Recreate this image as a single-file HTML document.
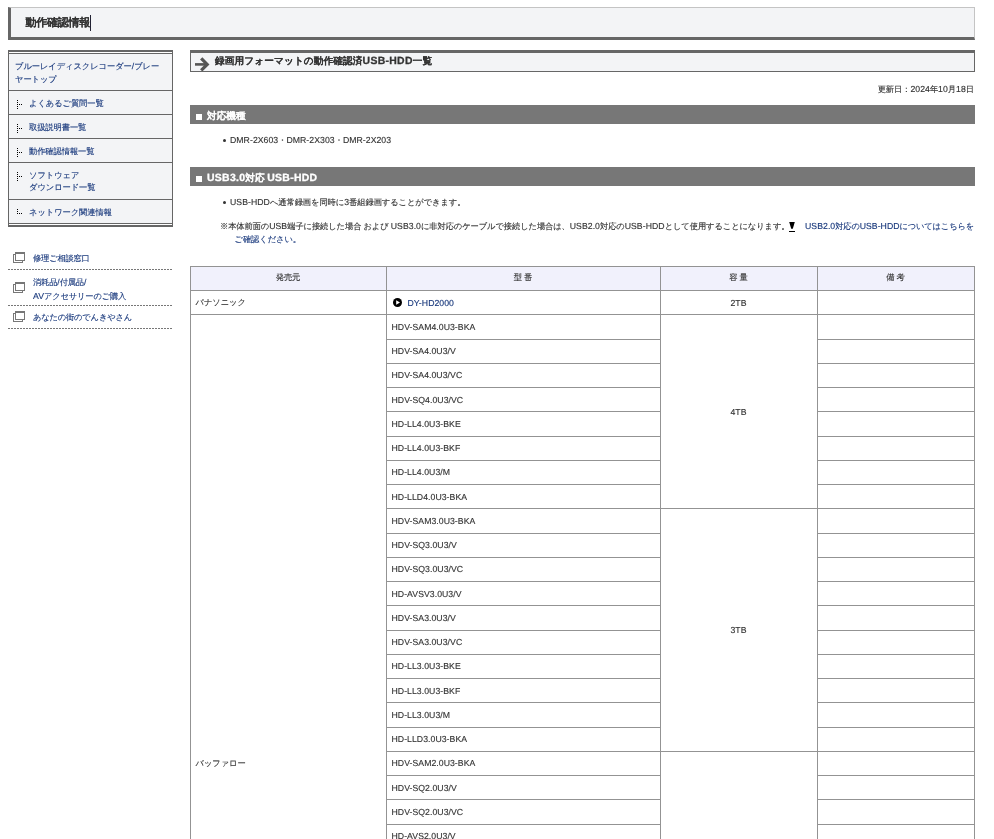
<!DOCTYPE html>
<html lang="ja">
<head>
<meta charset="utf-8">
<title>動作確認情報</title>
<style>
html,body{margin:0;padding:0;background:#fff;overflow:hidden;width:994px;height:839px;}
body{font-family:"Liberation Sans",sans-serif;color:#333;font-size:8.28px;line-height:12.4px;position:relative;letter-spacing:-.08px;-webkit-text-stroke:.13px;text-rendering:geometricPrecision;}
div,span,a,i,b,h1,h2,h3,ul,li{box-sizing:border-box;}
a{color:#18387c;text-decoration:none;}
#gs{position:absolute;left:0;top:0;width:994px;height:839px;overflow:hidden;will-change:transform;}
.l{font-size:1.05em;letter-spacing:.05px;}
h2 .l,h3 .l{font-size:1.08em;letter-spacing:.3px;-webkit-text-stroke:.3px;}
.t{position:absolute;white-space:nowrap;}
#hdr{position:absolute;left:8px;top:7px;width:967px;height:33px;border-left:3px solid #666;border-bottom:3px solid #666;border-top:1px solid #c4c4c4;border-right:1px solid #c4c4c4;background:#f3f4f6;}
#hdr>span{position:absolute;left:14.5px;top:6.5px;font-size:11.04px;font-weight:bold;line-height:16px;color:#333;white-space:nowrap;letter-spacing:-.3px;}
#hdr i{position:absolute;left:79px;top:7px;width:1px;height:16px;background:#223;}
#nav{position:absolute;left:8px;top:50px;width:165px;height:177px;border:1px solid #666;border-top-width:2px;border-bottom-width:2px;padding:1px 0;background:#fff;}
#nav ul{list-style:none;margin:0;padding:0;border-top:1px solid #666;border-bottom:1px solid #666;background:#f3f4f6;height:171px;}
#nav li{border-top:1px solid #666;height:24px;padding:6.9px 0 0 20px;line-height:12.4px;position:relative;white-space:nowrap;}
#nav li.f{border-top:0;height:36px;padding-left:6px;padding-top:6.4px;}
#nav li.d{height:37px;}
#nav li b{position:absolute;left:8px;top:9px;width:5px;height:9px;
 background:
 linear-gradient(#000,#000) 0 0/1px 1px no-repeat,
 linear-gradient(#000,#000) 0 2px/1px 1px no-repeat,
 linear-gradient(#000,#000) 0 4px/1px 1px no-repeat,
 linear-gradient(#000,#000) 2px 4px/1px 1px no-repeat,
 linear-gradient(#000,#000) 4px 4px/1px 1px no-repeat,
 linear-gradient(#000,#000) 0 6px/1px 1px no-repeat,
 linear-gradient(#000,#000) 0 8px/1px 1px no-repeat;}
#nav li b.e{height:5px;}
.sl{position:absolute;left:8px;width:165px;height:1px;background:repeating-linear-gradient(90deg,#777 0,#777 1.8px,transparent 1.8px,transparent 3px);}
.wi{position:absolute;left:13px;width:12px;height:11px;}
.wi:before{content:"";position:absolute;left:0;top:2px;width:10px;height:9px;border:1px solid #777;box-sizing:border-box;}
.wi:after{content:"";position:absolute;left:2px;top:0;width:10px;height:9px;border:1px solid #777;border-top-width:2px;background:#fff;box-sizing:border-box;}
.sd{position:absolute;left:33px;white-space:nowrap;letter-spacing:-.2px;}
h2{position:absolute;left:190px;top:50px;width:785px;height:22px;margin:0;border:1px solid #666;border-top:3px solid #666;background:#f3f4f6;font-size:9.66px;line-height:18px;font-weight:bold;overflow:hidden;letter-spacing:.09px;}
h2,h3,#hdr{-webkit-text-stroke:.04px;}
h2>span{position:absolute;left:24px;top:0;white-space:nowrap;}
h2 svg{position:absolute;left:4px;top:3px;}
h3{position:absolute;left:190px;width:785px;height:19px;margin:0;background:#777;color:#fff;font-size:9.66px;line-height:19px;font-weight:bold;white-space:nowrap;letter-spacing:0;}
h3 i{position:absolute;left:6px;top:9px;width:6px;height:6px;background:#fff;}
h3>span{position:absolute;left:17px;top:1.5px;}
.bul{position:absolute;left:230px;white-space:nowrap;}
.bul:before{content:"";position:absolute;left:-7.5px;top:5px;width:3px;height:3px;border-radius:1.5px;background:#333;}
.hl,.vl{position:absolute;background:#939393;}
.hl{height:1px;}
.vl{width:1px;}
.c{position:absolute;white-space:nowrap;line-height:12px;}
.cc{text-align:center;}
</style>
</head>
<body>
<div id="gs">
<div id="hdr"><span>動作確認情報</span><i></i></div>
<div id="nav"><ul>
<li class="f"><a>ブルーレイディスクレコーダー<span class="l">/</span>ブレー<br>ヤートップ</a></li>
<li><b></b><a>よくあるご質問一覧</a></li>
<li><b></b><a>取扱説明書一覧</a></li>
<li><b></b><a>動作確認情報一覧</a></li>
<li class="d"><b></b><a>ソフトウェア<br>ダウンロード一覧</a></li>
<li><b class="e"></b><a>ネットワーク関連情報</a></li>
</ul></div>
<i class="wi" style="top:252px"></i><a class="sd" style="top:252.5px">修理ご相談窓口</a>
<div class="sl" style="top:269px"></div>
<i class="wi" style="top:282px"></i><a class="sd" style="top:276.4px">消耗品<span class="l">/</span>付属品<span class="l">/</span><br><span class="l">AV</span>アクセサリーのご購入</a>
<div class="sl" style="top:305px"></div>
<i class="wi" style="top:311px"></i><a class="sd" style="top:311.7px">あなたの街のでんきやさん</a>
<div class="sl" style="top:328px"></div>
<h2><svg width="16" height="16" viewBox="0 0 16 16"><path d="M0 8.4h11" fill="none" stroke="#555" stroke-width="2.6"/><path d="M6.2 2.4l6 6-6 6" fill="none" stroke="#555" stroke-width="3.2"/></svg><span>録画用フォーマットの動作確認済<span class="l">USB-HDD</span>一覧</span></h2>
<div class="t" style="right:20px;top:83px">更新日：<span class="l">2024</span>年<span class="l">10</span>月<span class="l">18</span>日</div>
<h3 style="top:105px"><i></i><span>対応機種</span></h3>
<div class="bul" style="top:134px"><span class="l">DMR-2X603</span>・<span class="l">DMR-2X303</span>・<span class="l">DMR-2X203</span></div>
<h3 style="top:167px"><i></i><span><span class="l">USB3.0</span>対応 <span class="l">USB-HDD</span></span></h3>
<div class="bul" style="top:196px"><span class="l">USB-HDD</span>へ通常録画を同時に<span class="l">3</span>番組録画することができます。</div>
<div class="t" style="left:220px;top:219.5px;line-height:13.3px;letter-spacing:-.1px">※本体前面の<span class="l">USB</span>端子に接続した場合 および <span class="l">USB3.0</span>に非対応のケーブルで接続した場合は、<span class="l">USB2.0</span>対応の<span class="l">USB-HDD</span>として使用することになります。</div>
<svg class="t" style="left:789px;top:222px" width="6" height="10" viewBox="0 0 6 10"><path d="M0.2 0h5.6l-2 6.8h-1.6z" fill="#000"/><rect x="0" y="9" width="6" height="1" fill="#000"/></svg>
<a class="t" style="left:805px;top:219.5px;line-height:13.3px;letter-spacing:-.2px"><span class="l">USB2.0</span>対応の<span class="l">USB-HDD</span>についてはこちらを</a>
<a class="t" style="left:234.5px;top:232.8px;line-height:13.3px">ご確認ください。</a>

<div style="position:absolute;left:190px;top:266px;width:784px;height:24px;background:#f1f1fc"></div>
<div class="hl" style="left:190px;top:266px;width:785px"></div>
<div class="hl" style="left:190px;top:290px;width:785px"></div>
<div class="hl" style="left:190px;top:314px;width:785px"></div>
<div class="hl" style="left:386px;top:339px;width:275px"></div>
<div class="hl" style="left:817px;top:339px;width:158px"></div>
<div class="hl" style="left:386px;top:363px;width:275px"></div>
<div class="hl" style="left:817px;top:363px;width:158px"></div>
<div class="hl" style="left:386px;top:387px;width:275px"></div>
<div class="hl" style="left:817px;top:387px;width:158px"></div>
<div class="hl" style="left:386px;top:411px;width:275px"></div>
<div class="hl" style="left:817px;top:411px;width:158px"></div>
<div class="hl" style="left:386px;top:436px;width:275px"></div>
<div class="hl" style="left:817px;top:436px;width:158px"></div>
<div class="hl" style="left:386px;top:460px;width:275px"></div>
<div class="hl" style="left:817px;top:460px;width:158px"></div>
<div class="hl" style="left:386px;top:484px;width:275px"></div>
<div class="hl" style="left:817px;top:484px;width:158px"></div>
<div class="hl" style="left:386px;top:508px;width:589px"></div>
<div class="hl" style="left:386px;top:533px;width:275px"></div>
<div class="hl" style="left:817px;top:533px;width:158px"></div>
<div class="hl" style="left:386px;top:557px;width:275px"></div>
<div class="hl" style="left:817px;top:557px;width:158px"></div>
<div class="hl" style="left:386px;top:581px;width:275px"></div>
<div class="hl" style="left:817px;top:581px;width:158px"></div>
<div class="hl" style="left:386px;top:605px;width:275px"></div>
<div class="hl" style="left:817px;top:605px;width:158px"></div>
<div class="hl" style="left:386px;top:630px;width:275px"></div>
<div class="hl" style="left:817px;top:630px;width:158px"></div>
<div class="hl" style="left:386px;top:654px;width:275px"></div>
<div class="hl" style="left:817px;top:654px;width:158px"></div>
<div class="hl" style="left:386px;top:678px;width:275px"></div>
<div class="hl" style="left:817px;top:678px;width:158px"></div>
<div class="hl" style="left:386px;top:702px;width:275px"></div>
<div class="hl" style="left:817px;top:702px;width:158px"></div>
<div class="hl" style="left:386px;top:727px;width:275px"></div>
<div class="hl" style="left:817px;top:727px;width:158px"></div>
<div class="hl" style="left:386px;top:751px;width:589px"></div>
<div class="hl" style="left:386px;top:775px;width:275px"></div>
<div class="hl" style="left:817px;top:775px;width:158px"></div>
<div class="hl" style="left:386px;top:799px;width:275px"></div>
<div class="hl" style="left:817px;top:799px;width:158px"></div>
<div class="hl" style="left:386px;top:824px;width:275px"></div>
<div class="hl" style="left:817px;top:824px;width:158px"></div>
<div class="hl" style="left:386px;top:848px;width:275px"></div>
<div class="hl" style="left:817px;top:848px;width:158px"></div>
<div class="vl" style="left:190px;top:266px;height:573px"></div>
<div class="vl" style="left:386px;top:266px;height:573px"></div>
<div class="vl" style="left:660px;top:266px;height:573px"></div>
<div class="vl" style="left:817px;top:266px;height:573px"></div>
<div class="vl" style="left:974px;top:266px;height:573px"></div>
<div class="c cc" style="left:190px;width:196px;top:272.1px">発売元</div>
<div class="c cc" style="left:386px;width:274px;top:272.1px">型 番</div>
<div class="c cc" style="left:660px;width:157px;top:272.1px">容 量</div>
<div class="c cc" style="left:817px;width:157px;top:272.1px">備 考</div>
<div class="c" style="left:195.5px;top:297.1px">パナソニック</div>
<svg class="t" style="left:393px;top:298px" width="9" height="9" viewBox="0 0 9 9"><circle cx="4.5" cy="4.5" r="4.5" fill="#000"/><path d="M3.2 2.3L7 4.5 3.2 6.7z" fill="#fff"/></svg>
<a class="c l" style="left:407.5px;top:297.1px">DY-HD2000</a>
<div class="c cc l" style="left:660px;width:157px;top:297.1px">2TB</div>
<div class="c l" style="left:391.5px;top:321.1px">HDV-SAM4.0U3-BKA</div>
<div class="c l" style="left:391.5px;top:345.1px">HDV-SA4.0U3/V</div>
<div class="c l" style="left:391.5px;top:369.1px">HDV-SA4.0U3/VC</div>
<div class="c l" style="left:391.5px;top:394.1px">HDV-SQ4.0U3/VC</div>
<div class="c l" style="left:391.5px;top:418.1px">HD-LL4.0U3-BKE</div>
<div class="c l" style="left:391.5px;top:442.1px">HD-LL4.0U3-BKF</div>
<div class="c l" style="left:391.5px;top:466.1px">HD-LL4.0U3/M</div>
<div class="c l" style="left:391.5px;top:491.1px">HD-LLD4.0U3-BKA</div>
<div class="c l" style="left:391.5px;top:515.1px">HDV-SAM3.0U3-BKA</div>
<div class="c l" style="left:391.5px;top:539.1px">HDV-SQ3.0U3/V</div>
<div class="c l" style="left:391.5px;top:563.1px">HDV-SQ3.0U3/VC</div>
<div class="c l" style="left:391.5px;top:588.1px">HD-AVSV3.0U3/V</div>
<div class="c l" style="left:391.5px;top:612.1px">HDV-SA3.0U3/V</div>
<div class="c l" style="left:391.5px;top:636.1px">HDV-SA3.0U3/VC</div>
<div class="c l" style="left:391.5px;top:660.1px">HD-LL3.0U3-BKE</div>
<div class="c l" style="left:391.5px;top:685.1px">HD-LL3.0U3-BKF</div>
<div class="c l" style="left:391.5px;top:709.1px">HD-LL3.0U3/M</div>
<div class="c l" style="left:391.5px;top:733.1px">HD-LLD3.0U3-BKA</div>
<div class="c l" style="left:391.5px;top:757.1px">HDV-SAM2.0U3-BKA</div>
<div class="c l" style="left:391.5px;top:782.1px">HDV-SQ2.0U3/V</div>
<div class="c l" style="left:391.5px;top:806.1px">HDV-SQ2.0U3/VC</div>
<div class="c l" style="left:391.5px;top:830.1px">HD-AVS2.0U3/V</div>
<div class="c cc l" style="left:660px;width:157px;top:405.6px">4TB</div>
<div class="c cc l" style="left:660px;width:157px;top:624.1px">3TB</div>
<div class="c" style="left:195.5px;top:758px">バッファロー</div>
</div>
</body>
</html>
